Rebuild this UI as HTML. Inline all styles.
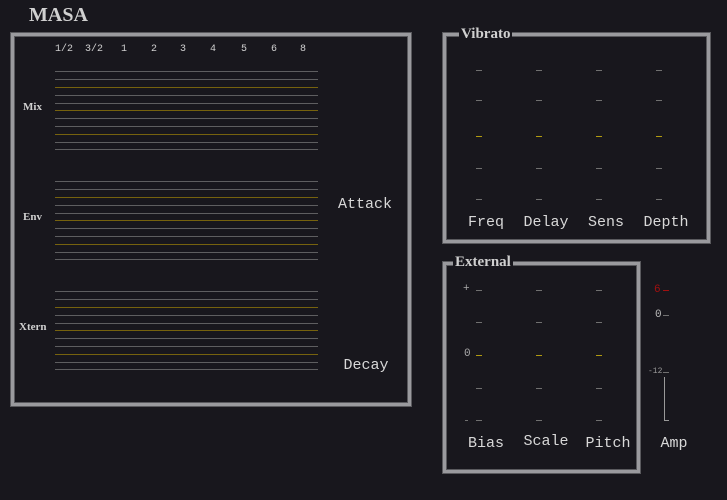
<!DOCTYPE html>
<html><head><meta charset="utf-8"><style>
*{margin:0;padding:0;box-sizing:border-box}
body{width:727px;height:500px;background:#18171d;position:relative;overflow:hidden;font-family:"Liberation Mono",monospace;color:#d8d8d8}
.a{position:absolute;white-space:nowrap}
.frame{position:absolute;border:3px solid #9a9a9e;box-shadow:inset 0 0 0 1px #5a5a5e,0 0 0 1px #5a5a5e}
.ttl{font-family:"Liberation Serif",serif;font-weight:bold;color:#d0d0d0;background:#18171d;padding:0 2px}
.ln{position:absolute;left:55px;width:263px;height:1px;background:#5e5e60}
.y{background:#76620e}
.d{position:absolute;width:6px;height:1px;background:#707070}
.dy{background:#b09a10}
.lab{font-size:15px;transform:translateX(-50%)}
.hd{font-size:10px;color:#cfcfcf;transform:translateX(-50%)}
</style></head><body>
<div class="a ttl" style="left:27px;top:4px;font-size:20px;background:none">MASA</div>
<div class="frame" style="left:11px;top:33px;width:400px;height:373px"></div>
<div class="frame" style="left:443px;top:33px;width:267px;height:210px"></div>
<div class="frame" style="left:443px;top:262px;width:197px;height:211px"></div>
<div class="a ttl" style="left:459px;top:26px;font-size:15px">Vibrato</div>
<div class="a ttl" style="left:453px;top:254px;font-size:15px">External</div>

<div class="a hd" style="left:64px;top:44px">1/2</div>
<div class="a hd" style="left:94px;top:44px">3/2</div>
<div class="a hd" style="left:124px;top:44px">1</div>
<div class="a hd" style="left:154px;top:44px">2</div>
<div class="a hd" style="left:183px;top:44px">3</div>
<div class="a hd" style="left:213px;top:44px">4</div>
<div class="a hd" style="left:244px;top:44px">5</div>
<div class="a hd" style="left:274px;top:44px">6</div>
<div class="a hd" style="left:303px;top:44px">8</div>

<div class="a ttl" style="left:23px;top:101px;font-size:11px;background:none;padding:0">Mix</div>
<div class="a ttl" style="left:23px;top:211px;font-size:11px;background:none;padding:0">Env</div>
<div class="a ttl" style="left:19px;top:321px;font-size:11px;background:none;padding:0">Xtern</div>

<div class="ln" style="top:71px"></div><div class="ln" style="top:79px"></div><div class="ln y" style="top:87px"></div><div class="ln" style="top:95px"></div><div class="ln" style="top:103px"></div><div class="ln y" style="top:110px"></div><div class="ln" style="top:118px"></div><div class="ln" style="top:126px"></div><div class="ln y" style="top:134px"></div><div class="ln" style="top:142px"></div><div class="ln" style="top:149px"></div>
<div class="ln" style="top:181px"></div><div class="ln" style="top:189px"></div><div class="ln y" style="top:197px"></div><div class="ln" style="top:205px"></div><div class="ln" style="top:213px"></div><div class="ln y" style="top:220px"></div><div class="ln" style="top:228px"></div><div class="ln" style="top:236px"></div><div class="ln y" style="top:244px"></div><div class="ln" style="top:252px"></div><div class="ln" style="top:259px"></div>
<div class="ln" style="top:291px"></div><div class="ln" style="top:299px"></div><div class="ln y" style="top:307px"></div><div class="ln" style="top:315px"></div><div class="ln" style="top:323px"></div><div class="ln y" style="top:330px"></div><div class="ln" style="top:338px"></div><div class="ln" style="top:346px"></div><div class="ln y" style="top:354px"></div><div class="ln" style="top:362px"></div><div class="ln" style="top:369px"></div>

<div class="a lab" style="left:365px;top:196px">Attack</div>
<div class="a lab" style="left:366px;top:357px">Decay</div>

<div class="d" style="left:476px;top:70px"></div><div class="d" style="left:536px;top:70px"></div><div class="d" style="left:596px;top:70px"></div><div class="d" style="left:656px;top:70px"></div>
<div class="d" style="left:476px;top:100px"></div><div class="d" style="left:536px;top:100px"></div><div class="d" style="left:596px;top:100px"></div><div class="d" style="left:656px;top:100px"></div>
<div class="d dy" style="left:476px;top:136px"></div><div class="d dy" style="left:536px;top:136px"></div><div class="d dy" style="left:596px;top:136px"></div><div class="d dy" style="left:656px;top:136px"></div>
<div class="d" style="left:476px;top:168px"></div><div class="d" style="left:536px;top:168px"></div><div class="d" style="left:596px;top:168px"></div><div class="d" style="left:656px;top:168px"></div>
<div class="d" style="left:476px;top:199px"></div><div class="d" style="left:536px;top:199px"></div><div class="d" style="left:596px;top:199px"></div><div class="d" style="left:656px;top:199px"></div>
<div class="a lab" style="left:486px;top:214px">Freq</div>
<div class="a lab" style="left:546px;top:214px">Delay</div>
<div class="a lab" style="left:606px;top:214px">Sens</div>
<div class="a lab" style="left:666px;top:214px">Depth</div>

<div class="d" style="left:476px;top:290px"></div><div class="d" style="left:536px;top:290px"></div><div class="d" style="left:596px;top:290px"></div>
<div class="d" style="left:476px;top:322px"></div><div class="d" style="left:536px;top:322px"></div><div class="d" style="left:596px;top:322px"></div>
<div class="d dy" style="left:476px;top:355px"></div><div class="d dy" style="left:536px;top:355px"></div><div class="d dy" style="left:596px;top:355px"></div>
<div class="d" style="left:476px;top:388px"></div><div class="d" style="left:536px;top:388px"></div><div class="d" style="left:596px;top:388px"></div>
<div class="d" style="left:476px;top:420px"></div><div class="d" style="left:536px;top:420px"></div><div class="d" style="left:596px;top:420px"></div>
<div class="a" style="left:463px;top:283px;font-size:11px;color:#aaa">+</div>
<div class="a" style="left:464px;top:348px;font-size:11px;color:#aaa">0</div>
<div class="d" style="left:465px;top:420px;width:3px"></div>
<div class="a lab" style="left:486px;top:435px">Bias</div>
<div class="a lab" style="left:546px;top:433px">Scale</div>
<div class="a lab" style="left:608px;top:435px">Pitch</div>

<div class="a" style="left:654px;top:284px;font-size:11px;color:#a01010">6</div>
<div class="d" style="left:663px;top:290px;background:#a01010"></div>
<div class="a" style="left:655px;top:309px;font-size:11px;color:#bbb">0</div>
<div class="d" style="left:663px;top:315px"></div>
<div class="a" style="left:648px;top:367px;font-size:8px;color:#999">-12</div>
<div class="d" style="left:663px;top:372px"></div>
<div class="a" style="left:664px;top:377px;width:1px;height:44px;background:#999"></div>
<div class="a" style="left:664px;top:420px;width:5px;height:1px;background:#999"></div>
<div class="a lab" style="left:674px;top:435px">Amp</div>
</body></html>
